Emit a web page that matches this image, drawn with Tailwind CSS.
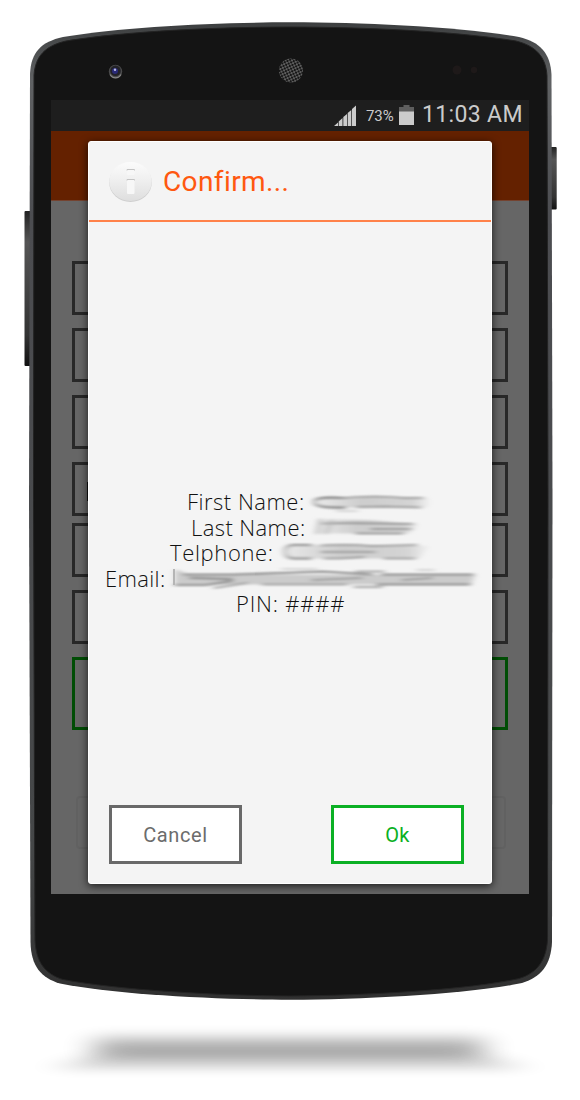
<!DOCTYPE html>
<html lang="en">
<head>
<meta charset="utf-8">
<title>Confirm</title>
<script src="https://cdn.jsdelivr.net/npm/@tailwindcss/browser@4"></script>
</head>
<body class="bg-white">
<main class="relative w-[580px] h-[1100px] overflow-hidden pl-[51px] pt-[100px]">
  <!-- phone body -->
  <svg class="absolute inset-0" width="580" height="1100" viewBox="0 0 580 1100">
    <defs>
      <linearGradient id="rim" x1="0" y1="22" x2="0" y2="1000" gradientUnits="userSpaceOnUse">
        <stop offset="0" stop-color="#3c3e3f"/><stop offset=".06" stop-color="#606264"/><stop offset=".2" stop-color="#4c4d51"/><stop offset=".85" stop-color="#454748"/><stop offset="1" stop-color="#303030"/>
      </linearGradient>
      <linearGradient id="key" x1="0" x2="0" y1="0" y2="1">
        <stop offset="0" stop-color="#222"/><stop offset=".2" stop-color="#555"/><stop offset=".8" stop-color="#333"/><stop offset="1" stop-color="#111"/>
      </linearGradient>
      <pattern id="mesh" width="4" height="4" patternUnits="userSpaceOnUse" patternTransform="rotate(20)">
        <rect width="4" height="4" fill="#626262"/><circle cx="1" cy="1" r="1.15" fill="#111"/><circle cx="3" cy="3" r="1.15" fill="#111"/>
      </pattern>
      <filter id="b8" x="-20%" y="-200%" width="140%" height="500%"><feGaussianBlur stdDeviation="16 6.500"/></filter>
      <filter id="b4" x="-20%" y="-200%" width="140%" height="500%"><feGaussianBlur stdDeviation="18 5"/></filter>
    </defs>
    <path d="M60 1070 Q70 1056 130 1050 H450 Q510 1056 520 1070 Z" fill="#000" opacity=".13" filter="url(#b4)"/>
    <rect x="95" y="1038" width="388" height="20" fill="#000" opacity=".3" filter="url(#b8)"/>
    <rect x="24.5" y="211" width="7" height="155" rx="1" fill="url(#key)"/>
    <rect x="550" y="147" width="6.700" height="62.500" rx="1" fill="url(#key)"/>
    <path d="M30 74 C31 52 41 42 63 37 C125 26.500 215 22.500 290 22.300 C365 22.500 457 26.500 519 37 C540 42 550.500 53 551.500 75 L552.500 500 L552 942 C551 965 541 977 522 983 C470 994 365 999.500 290 999.800 C215 999.500 115 994.500 60 983.500 C41 978 31 966 30.500 942 L29 500 Z" fill="url(#rim)"/>
    <path d="M34 75 C35.500 56 45 46 66 41 C128 31 215 27.200 290 27 C365 27.200 454 31 516 41 C536 46 546 57 547 76 L548 500 L547.500 940 C546 961 537 973 519 978.500 C468 990 365 995.500 290 996 C215 995.500 118 990 63 979.500 C45 974 36 962 35 940 L33.500 500 Z" fill="#141414" stroke="#232323" stroke-width="1"/>
    <!-- camera -->
    <circle cx="115.500" cy="71.500" r="6.700" fill="#4b4b4c"/><circle cx="115.500" cy="70.800" r="5.300" fill="#222228"/><circle cx="115" cy="71" r="3" fill="#2a2a78"/><circle cx="115" cy="69.800" r="1.200" fill="#b9bde6"/>
    <path d="M110 74.500 A6.200 6.200 0 0 0 121 74.500" fill="none" stroke="#888" stroke-width="1.200"/>
    <!-- earpiece -->
    <circle cx="291" cy="70.500" r="12" fill="url(#mesh)"/>
    <circle cx="457" cy="70" r="4.500" fill="#1e1919"/><circle cx="474" cy="70" r="3.200" fill="#1e1919"/>
  </svg>

  <section class="relative w-[478px] h-[794px] bg-[#666] overflow-hidden flex flex-col font-[Roboto,sans-serif]">
    <header class="h-[31px] shrink-0 bg-[#1e1e1e] text-[#cbcbcb] flex items-center justify-end pr-[6px]">
      <svg class="shrink-0 mt-[1px]" width="23" height="22" viewBox="0 0 23 22" fill="#cbcbcb"><path d="M0 21 L4 17.500 V21Z M4.700 21 V16.500 L8.500 13 V21Z M9.300 21 V12 L13 9 V21Z M13.700 21 V8 L17.300 5 V21Z M18 21 V4 L22 0.500 V21Z"/></svg>
      <span class="ml-[9px] pt-[1px] text-[15px] w-[29px] whitespace-nowrap tracking-[-0.1px]">73%</span>
      <svg class="shrink-0 ml-[4px]" width="15" height="21" viewBox="0 0 15 21"><path d="M4.500 0 H10.500 V2 H15 V7 H0 V2 H4.500Z" fill="#5e5e5e"/><path d="M0 6.500 H15 V20 H0Z" fill="#cbcbcb"/></svg>
      <span class="ml-[8px] text-[23px] w-[101px] whitespace-nowrap tracking-[0.35px]">11:03 AM</span>
    </header>
    <div class="h-[70px] shrink-0 bg-[#642100] border-b border-[#744330]"></div>
    <div class="flex flex-col px-[21px] pt-[60px]">
      <div class="h-[54px] border-[3px] border-[#282828]"></div>
      <div class="mt-[13px] h-[54px] border-[3px] border-[#282828]"></div>
      <div class="mt-[13px] h-[54px] border-[3px] border-[#282828]"></div>
      <div class="mt-[13px] h-[54px] border-[3px] border-[#282828] pl-[12px] pt-[17px]"><div class="w-[3px] h-[19px] bg-[#111]"></div></div>
      <div class="mt-[7px] h-[54px] border-[3px] border-[#282828]"></div>
      <div class="mt-[13px] h-[54px] border-[3px] border-[#282828]"></div>
      <div class="mt-[13px] h-[73px] border-[3px] border-[#004d05]"></div>
      <div class="mt-[66px] ml-[4px] mr-[2px] h-[53px] border-2 border-[#616161] rounded-sm"></div>
    </div>

    <!-- dialog -->
    <div class="absolute left-[37px] top-[41px] w-[404px] h-[743px] bg-[#f4f4f4] border border-white rounded-[3px] shadow-[0_2px_9px_rgba(0,0,0,0.75)] flex flex-col">
      <div class="h-[80px] shrink-0 border-b-2 border-[#ff8149] flex items-center pl-[20px]">
        <svg class="shrink-0 mt-[1px]" width="43" height="42" viewBox="0 0 43 42">
          <defs><linearGradient id="ic" x1="0" x2="0" y1="0" y2="1"><stop offset="0" stop-color="#fbfbfb"/><stop offset=".4" stop-color="#f1f1f1"/><stop offset="1" stop-color="#dedede"/></linearGradient></defs>
          <ellipse cx="21.500" cy="21.500" rx="21.300" ry="19.500" fill="#cfcfcf"/>
          <ellipse cx="21.500" cy="20.500" rx="21.300" ry="19.500" fill="url(#ic)"/>
          <rect x="18" y="8.500" width="7.500" height="5.500" rx="1" fill="#f7f7f7"/><rect x="18" y="18" width="7.500" height="15" rx="1" fill="#f7f7f7"/>
          <path d="M18 9.500 V8.500 H25.500 V9.500 M18 19.500 V18.500 H25.500 V19.500" fill="none" stroke="#c4c4c4"/>
        </svg>
        <h1 class="ml-[11px] pt-[2px] text-[28px] leading-none text-[#ff5810] whitespace-nowrap tracking-[0.4px]">Confirm...</h1>
      </div>
      <div class="pt-[267px] font-['Open_Sans',sans-serif] font-light text-[22px] leading-[25.5px] text-[#111] whitespace-nowrap">
        <div class="flex h-[25.5px] pl-[98px]"><span class="w-[128px] tracking-[0.5px]">First Name:</span>
          <svg class="shrink-0 overflow-visible" width="150" height="25" viewBox="0 0 150 25">
            <defs>
              <filter id="s" x="-10%" y="-40%" width="120%" height="180%"><feGaussianBlur stdDeviation="3 .8"/></filter>
              <linearGradient id="f"><stop offset="0" stop-color="#e8e8e8"/><stop offset=".4" stop-color="#cdcdcd"/><stop offset=".85" stop-color="#d4d4d4"/><stop offset="1" stop-color="#f0f0f0"/></linearGradient>
            </defs>
            <g filter="url(#s)" fill="none" stroke-linecap="round"><path d="M3 9 Q60 6 114 9 V18 Q60 19 3 18Z" fill="url(#f)"/><path d="M28 9 Q-3 7 0 14 Q1 19 30 18.500" stroke="#777" stroke-width="2.200"/><path d="M28 9 Q60 6 90 9 H108 M42 18 L70 17.500 L106 18.500" stroke="#888" stroke-width="1.500"/><path d="M22 22 H42" stroke="#d4d4d4" stroke-width="2"/></g>
          </svg></div>
        <div class="flex h-[25.5px] pl-[102px]"><span class="w-[120px] tracking-[0.4px]">Last Name:</span>
          <svg class="shrink-0 overflow-visible" width="150" height="25" viewBox="0 0 150 25"><g filter="url(#s)" fill="none" stroke-linecap="round"><path d="M8 4 L60 5 L108 9 L98 18.500 H5Z" fill="url(#f)"/><path d="M12 8.500 Q45 8 102 9 M60 14 H100 M45 18.500 H92" stroke="#808080" stroke-width="1.500"/><path d="M9 5 L6 18 M20 6 L15 18" stroke="#b5b5b5" stroke-width="3"/></g></svg></div>
        <div class="flex h-[25.5px] pl-[81px]"><span class="w-[109px] tracking-[0.65px]">Telphone:</span>
          <svg class="shrink-0 overflow-visible" width="160" height="25" viewBox="0 0 160 25"><g filter="url(#s)" fill="none" stroke-linecap="round"><path d="M6 5 Q80 4 150 6 L140 18.500 H6Z" fill="url(#f)"/><path d="M32 5 H12 Q5 8 6 12 Q7 18 14 18.500 H32" stroke="#888" stroke-width="2"/><path d="M42 5.500 Q70 4 92 6 L138 5 M42 12 H96 M45 18.500 H62 L85 17 M105 18.500 H136" stroke="#8c8c8c" stroke-width="1.500"/></g></svg></div>
        <div class="flex h-[25.5px] pl-[16px]"><span class="w-[67px] tracking-[0.35px]">Email:</span>
          <svg class="shrink-0 overflow-visible" width="310" height="26" viewBox="0 0 310 26"><g filter="url(#s)" fill="none" stroke-linecap="round"><path d="M3 3 L18 8.500 H303 L299 18.500 H3Z" fill="#cbcbcb"/><path d="M3 19 H34 L60 15 M12 8.500 H62 L110 7 L150 5.500 L200 8.500 M18 12 L60 13 M210 8.500 H301 M205 18.500 H298" stroke="#6c6c6c" stroke-width="1.600"/><path d="M42 22 L75 17 M90 18.500 H175 M140 14 L190 12 M182 21 H210 M184 5.500 H212 M230 14 L260 12" stroke="#909090" stroke-width="1.400"/><path d="M110 3 H145 M245 4 H262" stroke="#ccc" stroke-width="1.500"/></g><path d="M2 3 V19" stroke="#b5b5b5" stroke-width="2"/></svg></div>
        <div class="h-[25.5px] pl-[147px] tracking-[0.8px]">PIN: ####</div>
      </div>
      <div class="mt-auto mb-[19px] ml-[20px] mr-[27px] flex justify-between text-[20px]">
        <button class="w-[133px] h-[59px] pt-[1px] bg-white border-[3px] border-[#696969] text-[#6c6c6c] tracking-[0.6px]">Cancel</button>
        <button class="w-[133px] h-[59px] pt-[1px] bg-white border-[3px] border-[#0bb024] text-[#0bb024] tracking-[0.3px]">Ok</button>
      </div>
    </div>
  </section>
</main>
</body>
</html>
